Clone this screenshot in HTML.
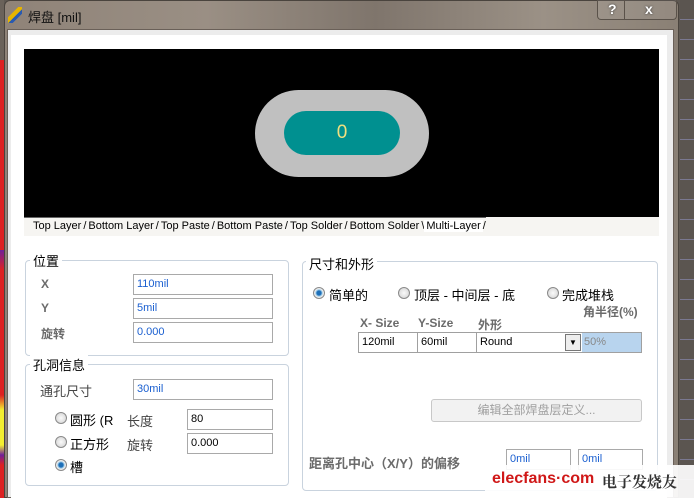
<!DOCTYPE html>
<html><head><meta charset="utf-8"><style>
*{margin:0;padding:0;box-sizing:border-box}
body{width:694px;height:498px;overflow:hidden;position:relative;background:#5e5852;font-family:"Liberation Sans","Noto Sans CJK SC",sans-serif;font-size:12px;color:#000}
.a{position:absolute}
.win{left:4px;top:0;width:675px;height:498px;background:linear-gradient(90deg,#8f8378,#9a8f84 30%,#7f756c 55%,#9b9186 80%,#8a8075);border-radius:6px 6px 0 0;border:1px solid #4a443e}
.client{left:7px;top:29px;width:667px;height:469px;background:#ececec;border:1px solid #6a6058}
.white{left:11px;top:35px;width:656px;height:463px;background:#fff}
.box{border:1px solid #c9d3de;border-radius:4px}
.lbl{background:#fff;padding:0 3px;font-size:13px}
.in{border:1px solid #a9a9a9;background:#fff;height:21px;font-size:11px;color:#1a5fd0;padding:3px 3px}
.rad{width:12px;height:12px;border-radius:50%;border:1px solid #8a8a8a;background:radial-gradient(#fafafa,#d0d0d0)}
.rad.on{background:radial-gradient(#1d6fb8 30%,#9ecbe8 45%,#eee 60%)}
.t{font-size:13px}
.g{color:#6b6b6b;font-weight:bold}
</style></head><body>
<div class="a" style="left:0;top:0;width:4px;height:498px;background:linear-gradient(#6a625a 0,#6a625a 60px,#d22 60px,#d22 250px,#70209a 250px,#d22 270px,#d22 395px,#f3ee30 410px,#f3ee30 445px,#70209a 455px,#d22 465px)"></div>
<div class="a" style="left:680px;top:0;width:14px;height:498px;background:repeating-linear-gradient(#5b5550 0,#5b5550 19px,#7a7890 19px,#7a7890 20px)"></div>
<div class="a win"></div>
<div class="a" style="left:8px;top:7px;width:14px;height:16px;background:linear-gradient(135deg,transparent 35%,#e6b400 35%,#e6b400 55%,#2a5ab0 55%,#2a5ab0 70%,transparent 70%)"></div>
<div class="a" style="left:28px;top:7px;font-size:13px;color:#111">焊盘 [mil]</div>
<div class="a" style="left:597px;top:0;width:80px;height:20px;border:1px solid #5a524a;border-top:none;border-radius:0 0 4px 4px;background:rgba(255,255,255,.08)"></div>
<div class="a" style="left:624px;top:0;width:1px;height:20px;background:#5a524a"></div>
<div class="a" style="left:608px;top:1px;color:#fff;font-weight:bold;font-size:14px;text-shadow:0 0 2px #333">?</div>
<div class="a" style="left:645px;top:1px;color:#fff;font-weight:bold;font-size:14px;text-shadow:0 0 2px #333">x</div>
<div class="a client"></div>
<div class="a white"></div>
<div class="a" style="left:24px;top:49px;width:635px;height:168px;background:#000"></div>
<div class="a" style="left:255px;top:90px;width:174px;height:87px;border-radius:44px;background:#c0c0c0"></div>
<div class="a" style="left:284px;top:111px;width:116px;height:44px;border-radius:22px;background:#009090;color:#f0e080;font-size:19px;text-align:center;line-height:44px">0</div>
<div class="a" style="left:24px;top:217px;width:635px;height:19px;background:#f6f5f2"></div>
<div class="a" style="left:24px;top:217px;height:18px;font-size:11px;white-space:nowrap;line-height:17px;border-top:1px solid #666">
<span style="padding:0 2px 0 9px">Top Layer</span>/<span style="padding:0 2px">Bottom Layer</span>/<span style="padding:0 2px">Top Paste</span>/<span style="padding:0 2px">Bottom Paste</span>/<span style="padding:0 2px">Top Solder</span>/<span style="padding:0 2px">Bottom Solder</span>\<span style="padding:0 2px;background:#fff">Multi-Layer</span>/</div>

<div class="a box" style="left:25px;top:260px;width:264px;height:96px"></div>
<div class="a lbl" style="left:30px;top:251px">位置</div>
<div class="a g" style="left:41px;top:277px">X</div>
<div class="a g" style="left:41px;top:301px">Y</div>
<div class="a g" style="left:41px;top:325px">旋转</div>
<div class="a in" style="left:133px;top:274px;width:140px">110mil</div>
<div class="a in" style="left:133px;top:298px;width:140px">5mil</div>
<div class="a in" style="left:133px;top:322px;width:140px">0.000</div>

<div class="a box" style="left:25px;top:364px;width:264px;height:122px"></div>
<div class="a lbl" style="left:30px;top:355px">孔洞信息</div>
<div class="a" style="left:40px;top:381px;color:#444;font-size:13px">通孔尺寸</div>
<div class="a in" style="left:133px;top:379px;width:140px">30mil</div>
<div class="a rad" style="left:55px;top:412px"></div><div class="a t" style="left:70px;top:410px">圆形 (R</div>
<div class="a rad" style="left:55px;top:436px"></div><div class="a t" style="left:70px;top:434px">正方形</div>
<div class="a rad on" style="left:55px;top:459px"></div><div class="a t" style="left:70px;top:457px">槽</div>
<div class="a" style="left:127px;top:411px;color:#444;font-size:13px">长度</div>
<div class="a" style="left:127px;top:435px;color:#444;font-size:13px">旋转</div>
<div class="a in" style="left:187px;top:409px;width:86px;color:#000">80</div>
<div class="a in" style="left:187px;top:433px;width:86px;color:#000">0.000</div>

<div class="a box" style="left:302px;top:261px;width:356px;height:230px"></div>
<div class="a lbl" style="left:306px;top:254px">尺寸和外形</div>
<div class="a rad on" style="left:313px;top:287px"></div><div class="a t" style="left:329px;top:285px">简单的</div>
<div class="a rad" style="left:398px;top:287px"></div><div class="a t" style="left:414px;top:285px">顶层 - 中间层 - 底</div>
<div class="a rad" style="left:547px;top:287px"></div><div class="a t" style="left:562px;top:285px">完成堆栈</div>
<div class="a g" style="left:583px;top:303px">角半径(%)</div>
<div class="a g" style="left:360px;top:316px">X- Size</div>
<div class="a g" style="left:418px;top:316px">Y-Size</div>
<div class="a g" style="left:478px;top:316px">外形</div>
<div class="a" style="left:358px;top:332px;width:284px;height:21px;border:1px solid #a0a0a0;background:#fff;font-size:11px"></div>
<div class="a" style="left:362px;top:336px;font-size:11px">120mil</div>
<div class="a" style="left:417px;top:332px;width:1px;height:21px;background:#a0a0a0"></div>
<div class="a" style="left:421px;top:336px;font-size:11px">60mil</div>
<div class="a" style="left:476px;top:332px;width:1px;height:21px;background:#a0a0a0"></div>
<div class="a" style="left:480px;top:336px;font-size:11px">Round</div>
<div class="a" style="left:565px;top:334px;width:16px;height:17px;border:1px solid #777;background:#eee;font-size:8px;text-align:center;line-height:16px">▼</div>
<div class="a" style="left:582px;top:333px;width:59px;height:19px;background:#b8d4ee;color:#888;font-size:11px;padding:3px 2px">50%</div>
<div class="a" style="left:431px;top:399px;width:211px;height:23px;border:1px solid #c8c8c8;border-radius:3px;background:#f2f2f2;color:#a0a0a0;font-size:12px;text-align:center;line-height:21px">编辑全部焊盘层定义...</div>
<div class="a g" style="left:309px;top:453px;font-size:13px">距离孔中心（X/Y）的偏移</div>
<div class="a in" style="left:506px;top:449px;width:65px">0mil</div>
<div class="a in" style="left:578px;top:449px;width:65px">0mil</div>
<div class="a" style="left:485px;top:465px;width:209px;height:33px;background:rgba(255,255,255,.92)"></div>
<div class="a" style="left:492px;top:470px;color:#d01818;font-size:16px;font-weight:bold">elecfans·com</div>
<div class="a" style="left:602px;top:471px;color:#333;font-size:15px;font-family:'Noto Serif CJK SC',serif;font-weight:bold">电子发烧友</div>
</body></html>
